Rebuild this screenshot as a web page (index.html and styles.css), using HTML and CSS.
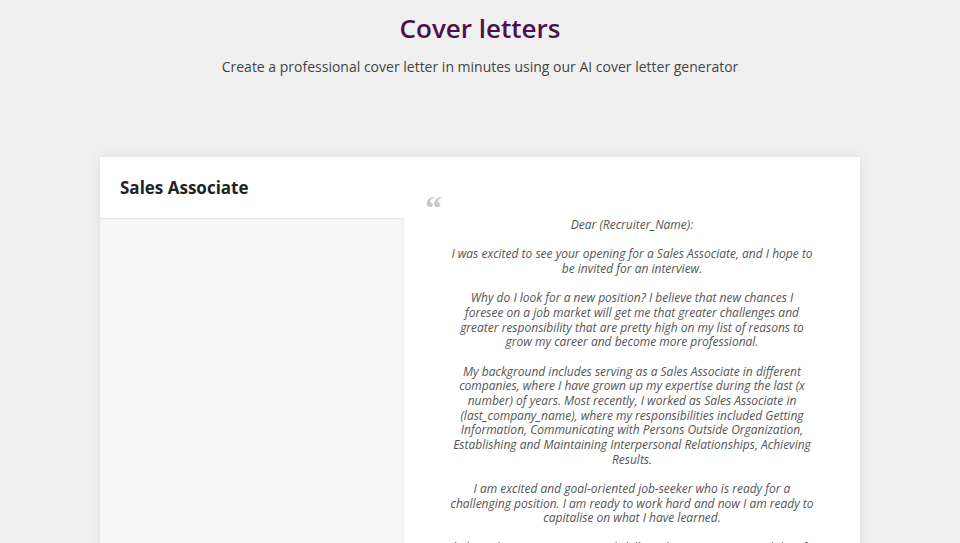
FILE: index.html
```html
<!DOCTYPE html>
<html lang="en">
<head>
<meta charset="utf-8">
<title>Cover letters</title>
<link rel="stylesheet" href="styles.css">
</head>
<body>
<header class="intro">
  <h1 class="intro-title">Cover letters</h1>
  <p class="intro-sub">Create a professional cover letter in minutes using our AI cover letter generator</p>
</header>
<main class="card">
  <aside class="side">
    <div class="side-head">Sales Associate</div>
    <div class="side-body"></div>
  </aside>
  <section class="letter">
    <div class="quote">&ldquo;</div>
    <div class="letter-text">
      <p>Dear (Recruiter_Name):</p>
      <p>I was excited to see your opening for a Sales Associate, and I hope to<br>be invited for an interview.</p>
      <p>Why do I look for a new position? I believe that new chances I<br>foresee on a job market will get me that greater challenges and<br>greater responsibility that are pretty high on my list of reasons to<br>grow my career and become more professional.</p>
      <p>My background includes serving as a Sales Associate in different<br>companies, where I have grown up my expertise during the last (x<br>number) of years. Most recently, I worked as Sales Associate in<br>(last_company_name), where my responsibilities included Getting<br>Information, Communicating with Persons Outside Organization,<br>Establishing and Maintaining Interpersonal Relationships, Achieving<br>Results.</p>
      <p>I am excited and goal-oriented job-seeker who is ready for a<br>challenging position. I am ready to work hard and now I am ready to<br>capitalise on what I have learned.</p>
      <p>I believe that my experience and skills make me a strong candidate for<br>this position and I would welcome the chance to discuss it with you.</p>
    </div>
  </section>
</main>
</body>
</html>
```
FILE: styles.css
```css
html, body {
  margin: 0;
  padding: 0;
}
body {
  background: #f0f0f0;
  font-family: "Open Sans", "DejaVu Sans", sans-serif;
  color: #444;
  overflow: hidden;
  height: 543px;
}
.intro {
  text-align: center;
  padding-top: 12px;
}
.intro-title {
  margin: 0;
  font-size: 26px;
  line-height: 32px;
  font-weight: 600;
  color: #4f0e4c;
}
.intro-sub {
  margin: 13px 0 0;
  font-size: 14px;
  line-height: 20px;
  color: #444;
}
.card {
  margin: 80px 100px 0;
  background: #fff;
  display: grid;
  grid-template-columns: 304px 1fr;
  box-shadow: 0 0 12px rgba(0, 0, 0, 0.08);
  min-height: 420px;
}
.side {
  display: flex;
  flex-direction: column;
}
.side-head {
  height: 62px;
  box-sizing: border-box;
  padding: 21px 20px 0;
  font-size: 17px;
  line-height: 20px;
  font-weight: 700;
  color: #222;
  border-bottom: 1px solid #e4e4e4;
}
.side-body {
  flex: 1;
  background: #f7f7f7;
  box-shadow: inset -2px 0 3px rgba(0,0,0,0.03);
}
.letter {
  padding: 30px 24px 0 21px;
}
.quote {
  font-family: "Liberation Serif", serif;
  font-weight: 700;
  font-size: 34px;
  line-height: 42px;
  height: 26px;
  color: #c8c8c8;
}
.letter-text {
  margin-top: 5px;
  padding-left: 3px;
  text-align: center;
  font-style: italic;
  font-size: 12px;
  line-height: 14.67px;
  color: #555;
}
.letter-text p {
  margin: 0 0 14.67px;
  white-space: nowrap;
}
```
